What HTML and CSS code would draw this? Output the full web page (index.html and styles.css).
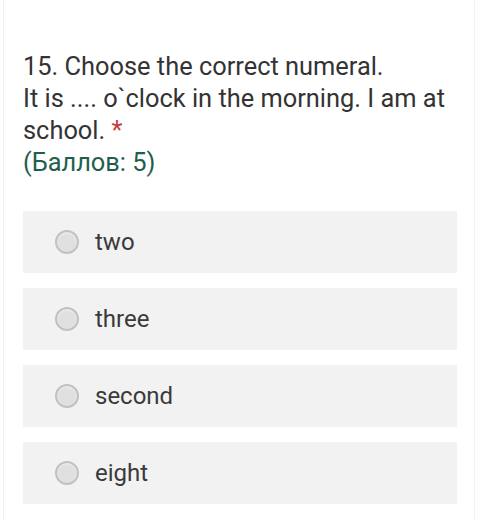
FILE: index.html
```html
<!DOCTYPE html>
<html lang="ru">
<head>
    <meta charset="UTF-8">
    <meta name="viewport" content="width=device-width, initial-scale=1.0">
    <title>Тест</title>
    <link rel="stylesheet" href="styles.css">
</head>
<body>
    <div class="page">
        <div class="question">
            <div class="question-title">
                15. Choose the correct numeral.<br>
                It is .... o`clock in the morning. I am at school. <span class="required">*</span>
            </div>
            <div class="points">(Баллов: 5)</div>
        </div>

        <div class="options">
            <label class="option">
                <span class="radio"></span>
                <span class="option-text">two</span>
            </label>
            <label class="option">
                <span class="radio"></span>
                <span class="option-text">three</span>
            </label>
            <label class="option">
                <span class="radio"></span>
                <span class="option-text">second</span>
            </label>
            <label class="option">
                <span class="radio"></span>
                <span class="option-text">eight</span>
            </label>
        </div>
    </div>
</body>
</html>
```

FILE: styles.css
```css
* {
    margin: 0;
    padding: 0;
    box-sizing: border-box;
}

body {
    font-family: Roboto, 'Noto Sans', sans-serif;
    background: white;
    color: #333;
}

.page {
    margin: 0 5px 0 3px;
    min-height: 521px;
    border-left: 1px solid #f2f2f2;
    border-right: 1px solid #f2f2f2;
    padding: 50px 17px 0 19px;
}

.question {
    font-size: 25.4px;
    line-height: 32px;
    margin-bottom: 33px;
}

.required {
    color: #c53a3a;
}

.points {
    color: #1f5e4f;
}

.options {
    display: flex;
    flex-direction: column;
    gap: 15px;
}

.option {
    display: flex;
    align-items: center;
    gap: 16px;
    height: 62px;
    padding-left: 32px;
    background: #f2f2f2;
    font-size: 24px;
    color: #3a3a3a;
    cursor: pointer;
}

.radio {
    width: 24px;
    height: 24px;
    border-radius: 50%;
    border: 2px solid #c2c2c2;
    background: #e0e0e0;
    box-shadow: inset 0 1px 2px rgba(255, 255, 255, 0.6);
}
```
